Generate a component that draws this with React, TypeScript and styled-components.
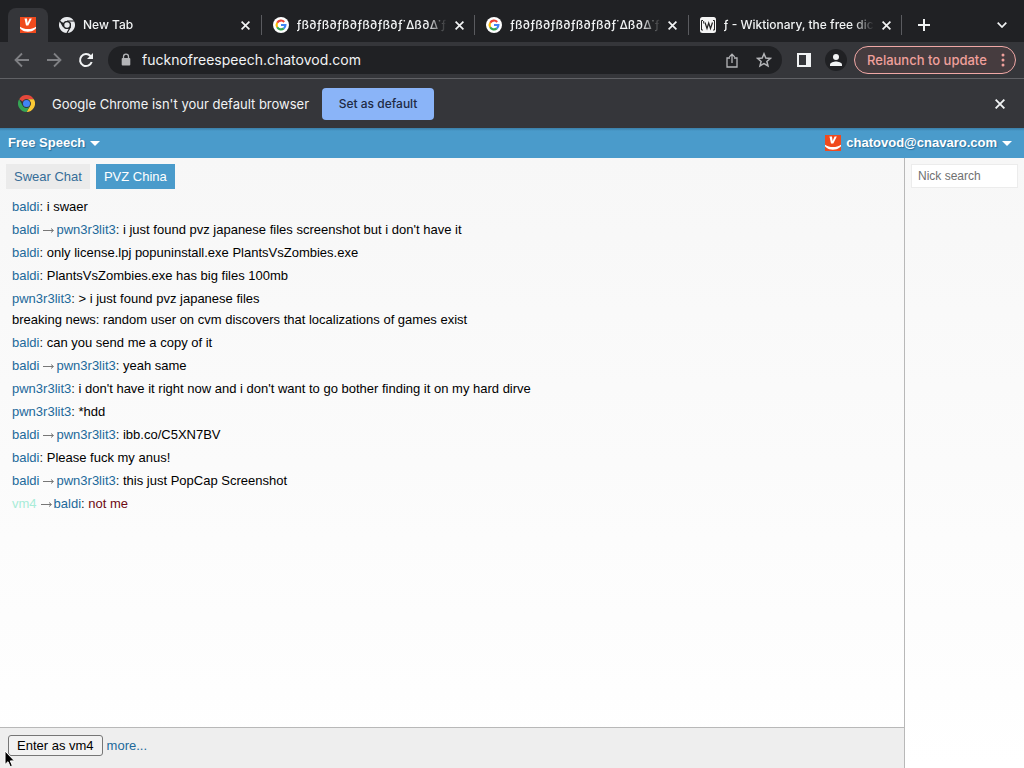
import React from "react";
import styled, { createGlobalStyle } from "styled-components";

const GlobalStyle = createGlobalStyle`
  *, *::before, *::after { box-sizing: border-box; }
  body { margin: 0; font-family: "Liberation Sans", Arial, sans-serif; font-size: 13px; }
  button, input { font: inherit; }
`;

const uiFont = `Inter, Roboto, sans-serif`;

const Page = styled.div`
  min-height: 100vh;
  display: flex;
  flex-direction: column;
`;

const IconButton = styled.button<{ $size?: number }>`
  display: flex;
  flex: none;
  align-items: center;
  justify-content: center;
  width: ${(p) => p.$size ?? 32}px;
  height: ${(p) => p.$size ?? 32}px;
  padding: 0;
  border: 0;
  background: none;
  color: inherit;
`;

/* Browser chrome */
const TabStrip = styled.div`
  display: flex;
  align-items: flex-end;
  height: 42px;
  padding: 8px 6px 0 8px;
  background: #202124;
  color: #f1f3f4;
  font: 500 12px/16px ${uiFont};
`;

const ActiveTab = styled.button`
  flex: none;
  display: flex;
  align-items: center;
  justify-content: center;
  width: 40px;
  height: 34px;
  padding: 0;
  border: 0;
  border-radius: 8px 8px 0 0;
  background: #35363a;
`;

const Tab = styled.div`
  flex: 1;
  min-width: 0;
  display: flex;
  align-items: center;
  gap: 8px;
  height: 34px;
  padding: 0 8px 0 11px;
  background: linear-gradient(#5a5b5f, #5a5b5f) right center / 1px 20px no-repeat;
`;

const TabIcon = styled.span`
  flex: none;
  display: flex;
`;

const TabTitle = styled.span`
  flex: 1;
  min-width: 0;
  margin-right: -4px;
  overflow: hidden;
  white-space: nowrap;
  mask-image: linear-gradient(to right, #000 calc(100% - 20px), transparent);
`;

const StripActions = styled.div`
  display: flex;
  align-items: center;
  justify-content: space-between;
  width: 116px;
  height: 34px;
  padding-left: 6px;
`;

const Toolbar = styled.div`
  display: flex;
  align-items: center;
  height: 37px;
  padding: 0 8px 0 6px;
  border-bottom: 1px solid #606165;
  background: #35363a;
  color: #f1f3f4;
  font: 500 13px/16px ${uiFont};
`;

const DimButton = styled(IconButton)`
  color: #7f8084;
`;

const Omnibox = styled.form`
  flex: 1;
  min-width: 0;
  display: flex;
  align-items: center;
  height: 28px;
  margin: 0 6px;
  padding: 0 2px 0 12px;
  border-radius: 14px;
  background: #202124;
  color: #b4b5b8;
`;

const Address = styled.input`
  flex: 1;
  min-width: 0;
  margin-left: 10px;
  padding: 0;
  border: 0;
  outline: 0;
  background: none;
  color: #f1f3f4;
  font: 400 14px/20px ${uiFont};
`;

const Relaunch = styled.button`
  display: flex;
  align-items: center;
  justify-content: space-between;
  width: 162px;
  height: 28px;
  margin-left: 2px;
  padding: 0 10px 0 12px;
  border: 1px solid #f0a8a6;
  border-radius: 14px;
  background: #463c3f;
  color: #f0a09c;
  font: 500 13px/16px ${uiFont};
  white-space: nowrap;
`;

const InfoBar = styled.div`
  display: flex;
  align-items: center;
  height: 49px;
  padding: 0 8px 0 18px;
  background: #35363a;
  color: #f1f3f4;
  font: 400 13px/16px ${uiFont};
`;

const InfoText = styled.span`
  margin-left: 17px;
`;

const DefaultButton = styled.button`
  width: 112px;
  height: 32px;
  margin: 0 auto 0 13px;
  padding: 0;
  border: 0;
  border-radius: 4px;
  background: #8ab4f8;
  color: #202a44;
  font: 500 12px/16px ${uiFont};
`;

/* Chat page */
const Header = styled.header`
  display: flex;
  align-items: center;
  justify-content: space-between;
  height: 30px;
  padding: 0 12px 0 8px;
  background: linear-gradient(#3a7fa8, #4a9bcb 3px);
`;

const HeaderMenu = styled.button`
  display: flex;
  align-items: center;
  gap: 5px;
  padding: 0;
  border: 0;
  background: none;
  color: #fff;
  font-weight: bold;
  line-height: 18px;
  text-shadow: 1px 1px 1px #2c6f9a;
`;

const Caret = styled.span`
  border: 5px solid transparent;
  border-top-color: #fff;
  border-bottom: 0;
`;

const Body = styled.div`
  flex: 1;
  display: flex;
  background: linear-gradient(#f7f7f7, #ffffff);
`;

const Main = styled.main`
  flex: 1;
  min-width: 0;
  display: flex;
  flex-direction: column;
`;

const Rooms = styled.nav`
  display: flex;
  gap: 6px;
  padding: 6px;
`;

const Room = styled.button<{ $active?: boolean }>`
  height: 25px;
  padding: 0 8px;
  border: 0;
  background: ${(p) => (p.$active ? "#4a9bcb" : "#ebebeb")};
  color: ${(p) => (p.$active ? "#fff" : "#366d98")};
`;

const Messages = styled.div`
  flex: 1;
  padding: 1px 12px;
  color: #000;
`;

const Message = styled.p<{ $personal?: boolean }>`
  margin: 0 0 2px;
  line-height: 21px;
  color: ${(p) => (p.$personal ? "#6e0a12" : "inherit")};
`;

const Continuation = styled.span`
  display: block;
`;

const Nick = styled.a<{ $pale?: boolean }>`
  color: ${(p) => (p.$pale ? "#a8ecd8" : "#22699a")};
  text-decoration: none;
`;

const Arrow = styled.svg`
  margin: 0 2px 0 4px;
`;

const Colon = styled.span`
  color: #222;
`;

const Footer = styled.footer`
  display: flex;
  align-items: flex-start;
  gap: 4px;
  height: 41px;
  padding: 7px 8px;
  border-top: 1px solid #b8b8b8;
  background: #eeeeee;
`;

const EnterButton = styled.button`
  height: 21px;
  padding: 0 8px;
  border: 1px solid #767676;
  border-radius: 3px;
  background: #f2f2f2;
  color: #000;
`;

const MoreLink = styled.a`
  line-height: 21px;
  color: #22699a;
  text-decoration: none;
`;

const Sidebar = styled.aside`
  width: 120px;
  padding: 6px;
  border-left: 1px solid #b8b8b8;
`;

const NickSearch = styled.input`
  display: block;
  width: 100%;
  height: 24px;
  padding: 0 6px;
  border: 1px solid #ececec;
  background: #fff;
  font-size: 12px;
  &::placeholder { color: #707070; opacity: 1; }
`;

const Cursor = styled.svg`
  position: fixed;
  left: 4px;
  bottom: 0;
`;

const CloseIcon = ({ size = 9 }: { size?: number }) => (
  <svg width={size} height={size} viewBox="0 0 8 8" stroke="currentColor" strokeWidth="1.5">
    <path d="M.5.5l7 7M7.5.5l-7 7" />
  </svg>
);

const ChatovodIcon = () => (
  <svg width="16" height="16" viewBox="0 0 16 16">
    <path fill="#f04a1d" d="M0 0h16v16H0z" />
    <path d="M4.500 1.500h2.500l.6 4.400 2-4.400h2.200L8.300 8.500H6z" fill="#fff" />
    <path d="M0 9.700c4.500 3.200 11.500 3.200 16 0v1.600c-1.200 1.300-2.800 2.400-4.500 2.900-2.300.6-5 .6-7.200 0C2.700 13.700 1.200 12.600 0 11.300z" fill="#fff" />
  </svg>
);

const GoogleIcon = () => (
  <svg width="16" height="16" viewBox="0 0 16 16">
    <circle cx="8" cy="8" r="8" fill="#fff" />
    <g fill="none" strokeWidth="2.200">
      <path d="M4.200 5.700A4.400 4.400 0 0 1 11.200 4.900" stroke="#ea4335" />
      <path d="M4.200 5.700a4.500 4.500 0 0 0 0 4.600" stroke="#fbbc05" />
      <path d="M4.200 10.300a4.400 4.400 0 0 0 6.600 1.100" stroke="#34a853" />
      <path d="M8 8h4.400a4.400 4.400 0 0 1-1.600 3.400" stroke="#4285f4" />
    </g>
  </svg>
);

const ChromeIcon = ({ mono }: { mono?: boolean }) => {
  const c = mono ? ["#e8eaed", "#e8eaed", "#e8eaed"] : ["#e5483b", "#fbc934", "#35a454"];
  const size = mono ? 16 : 17;
  return (
    <svg width={size} height={size} viewBox="0 0 16 16">
      <path fill={c[0]} d="M1.070 4A8 8 0 0 1 14.930 4H8a4 4 0 0 0-3.460 2z" />
      <path fill={c[1]} d="M14.930 4A8 8 0 0 1 8 16l3.460-6A4 4 0 0 0 8 4z" />
      <path fill={c[2]} d="M8 16A8 8 0 0 1 1.070 4l3.470 6A4 4 0 0 0 11.460 10z" />
      {mono && <path d="M8 4h7M4.540 10L1 4M11.460 10L8 16" stroke="#202124" strokeWidth="1.200" />}
      <circle cx="8" cy="8" r="4" fill={mono ? "#202124" : "#35363a"} />
      <circle cx="8" cy="8" r={mono ? 2.7 : 3.3} fill={mono ? "#e8eaed" : "#4285f4"} />
    </svg>
  );
};

const WiktionaryIcon = () => (
  <svg width="16" height="16" viewBox="0 0 16 16">
    <rect width="16" height="16" rx="2.500" fill="#f4f4f4" />
    <g fill="none" stroke="#222">
      <path d="M3 3.500H1.500v9.500H3M13 3.500h1.500v9.500H13M3.700 4v2.500" strokeWidth="1" />
      <path d="M5 5.500l2 6L8.700 6l1.800 5.500 2-6" strokeWidth="1.200" />
    </g>
  </svg>
);

const ArrowIcon = ({ flip }: { flip?: boolean }) => (
  <svg width="16" height="16" viewBox="0 0 16 16" fill="none" stroke="currentColor" strokeWidth="1.800">
    <path d={flip ? "M1 8h13M8 1.500L14.500 8 8 14.500" : "M15 8H2M8 1.500L1.500 8 8 14.500"} />
  </svg>
);

const ReplyArrow = () => (
  <Arrow width="11" height="7" viewBox="0 0 11 7" fill="none" stroke="#777" role="img" aria-label="to">
    <path d="M0 3.500h10M8 1.500l2.500 2L8 5.500" />
  </Arrow>
);

const junk = "ƒß∂ƒß∂ƒß∂ƒß∂ƒß∂ƒ˙∆ß∂∆˙ƒß∂";

const tabs = [
  { title: "New Tab", icon: <ChromeIcon mono /> },
  { title: junk, icon: <GoogleIcon /> },
  { title: junk, icon: <GoogleIcon /> },
  { title: "ƒ - Wiktionary, the free dictionary", icon: <WiktionaryIcon /> },
];

type Line = { from: string; to?: string; text: string; more?: string; personal?: boolean };

const lines: Line[] = [
  { from: "baldi", text: "i swaer" },
  { from: "baldi", to: "pwn3r3lit3", text: "i just found pvz japanese files screenshot but i don't have it" },
  { from: "baldi", text: "only license.lpj popuninstall.exe PlantsVsZombies.exe" },
  { from: "baldi", text: "PlantsVsZombies.exe has big files 100mb" },
  {
    from: "pwn3r3lit3",
    text: "> i just found pvz japanese files",
    more: "breaking news: random user on cvm discovers that localizations of games exist",
  },
  { from: "baldi", text: "can you send me a copy of it" },
  { from: "baldi", to: "pwn3r3lit3", text: "yeah same" },
  { from: "pwn3r3lit3", text: "i don't have it right now and i don't want to go bother finding it on my hard dirve" },
  { from: "pwn3r3lit3", text: "*hdd" },
  { from: "baldi", to: "pwn3r3lit3", text: "ibb.co/C5XN7BV" },
  { from: "baldi", text: "Please fuck my anus!" },
  { from: "baldi", to: "pwn3r3lit3", text: "this just PopCap Screenshot" },
  { from: "vm4", to: "baldi", text: "not me", personal: true },
];

export default function App() {
  return (
    <Page>
      <GlobalStyle />
      <TabStrip>
        <ActiveTab aria-label="Free Speech"><ChatovodIcon /></ActiveTab>
        {tabs.map((t, i) => (
          <Tab key={i}>
            <TabIcon>{t.icon}</TabIcon>
            <TabTitle>{t.title}</TabTitle>
            <IconButton $size={16} aria-label="Close tab"><CloseIcon /></IconButton>
          </Tab>
        ))}
        <StripActions>
          <IconButton aria-label="New tab">
            <svg width="12" height="12" viewBox="0 0 12 12" stroke="currentColor" strokeWidth="2"><path d="M6 0v12M0 6h12" /></svg>
          </IconButton>
          <IconButton aria-label="Search tabs">
            <svg width="10" height="6" viewBox="0 0 10 6" fill="none" stroke="currentColor" strokeWidth="1.700"><path d="M.7.700L5 5 9.300.700" /></svg>
          </IconButton>
        </StripActions>
      </TabStrip>

      <Toolbar>
        <DimButton aria-label="Back"><ArrowIcon /></DimButton>
        <DimButton aria-label="Forward"><ArrowIcon flip /></DimButton>
        <IconButton aria-label="Reload">
          <svg width="16" height="16" viewBox="0 0 16 16" fill="none" stroke="currentColor" strokeWidth="2">
            <path d="M13.700 10A6 6 0 1 1 12.500 4l1.200 1.300" />
            <path d="M15 1v6H9z" fill="currentColor" stroke="none" />
          </svg>
        </IconButton>
        <Omnibox>
          <svg width="12" height="14" viewBox="0 0 12 14">
            <path d="M3.500 6V3.700a2.500 2.500 0 0 1 5 0V6" fill="none" stroke="currentColor" strokeWidth="1.300" />
            <rect x="1.700" y="5" width="8.600" height="7.500" rx="1" fill="currentColor" />
          </svg>
          <Address aria-label="Address" defaultValue="fucknofreespeech.chatovod.com" />
          <IconButton type="button" aria-label="Share">
            <svg width="12" height="15" viewBox="0 0 12 15" fill="none" stroke="currentColor" strokeWidth="1.300">
              <path d="M4 5H1v9h10V5H8M6 10V1.200M3.300 3.900L6 1.200l2.700 2.700" />
            </svg>
          </IconButton>
          <IconButton type="button" aria-label="Bookmark">
            <svg width="16" height="16" viewBox="0 0 16 16" fill="none" stroke="currentColor" strokeWidth="1.500">
              <path d="M8 1.800l1.800 4.200 4.600.4-3.500 3 1.100 4.500L8 11.500l-4 2.400 1.100-4.500-3.500-3L6.200 6z" />
            </svg>
          </IconButton>
        </Omnibox>
        <IconButton aria-label="Side panel">
          <svg width="14" height="14" viewBox="0 0 14 14">
            <path d="M1 1h12v12H1z" fill="none" stroke="currentColor" strokeWidth="2" />
            <path d="M9 0h5v14H9z" fill="currentColor" />
          </svg>
        </IconButton>
        <IconButton aria-label="Profile">
          <svg width="22" height="22" viewBox="0 0 22 22">
            <circle cx="11" cy="11" r="11" fill="#202124" />
            <circle cx="11" cy="8" r="3" fill="currentColor" />
            <path d="M5 17v-1.500c0-2 4-3 6-3s6 1 6 3V17z" fill="currentColor" />
          </svg>
        </IconButton>
        <Relaunch>
          Relaunch to update
          <svg width="4" height="14" viewBox="0 0 4 14" fill="currentColor">
            <circle cx="2" cy="2" r="1.500" /><circle cx="2" cy="7" r="1.500" /><circle cx="2" cy="12" r="1.500" />
          </svg>
        </Relaunch>
      </Toolbar>

      <InfoBar>
        <ChromeIcon />
        <InfoText>Google Chrome isn't your default browser</InfoText>
        <DefaultButton>Set as default</DefaultButton>
        <IconButton aria-label="Dismiss"><CloseIcon size={10} /></IconButton>
      </InfoBar>

      <Header>
        <HeaderMenu>Free Speech <Caret /></HeaderMenu>
        <HeaderMenu><ChatovodIcon />chatovod@cnavaro.com <Caret /></HeaderMenu>
      </Header>

      <Body>
        <Main>
          <Rooms>
            <Room>Swear Chat</Room>
            <Room $active>PVZ China</Room>
          </Rooms>
          <Messages>
            {lines.map((l, i) => (
              <Message key={i} $personal={l.personal}>
                <Nick href="#" $pale={l.personal}>{l.from}</Nick>
                {l.to && (
                  <>
                    <ReplyArrow />
                    <Nick href="#">{l.to}</Nick>
                  </>
                )}
                <Colon>:</Colon> {l.text}
                {l.more && <Continuation>{l.more}</Continuation>}
              </Message>
            ))}
          </Messages>
          <Footer>
            <EnterButton>Enter as vm4</EnterButton>
            <MoreLink href="#">more...</MoreLink>
          </Footer>
        </Main>
        <Sidebar>
          <NickSearch aria-label="Nick search" placeholder="Nick search" />
        </Sidebar>
      </Body>

      <Cursor width="12" height="18" viewBox="0 0 12 18">
        <path d="M1 1v13.500l3-2.800 2.200 5 2.200-1-2.100-4.800h4.200z" fill="#000" stroke="#fff" />
      </Cursor>
    </Page>
  );
}
